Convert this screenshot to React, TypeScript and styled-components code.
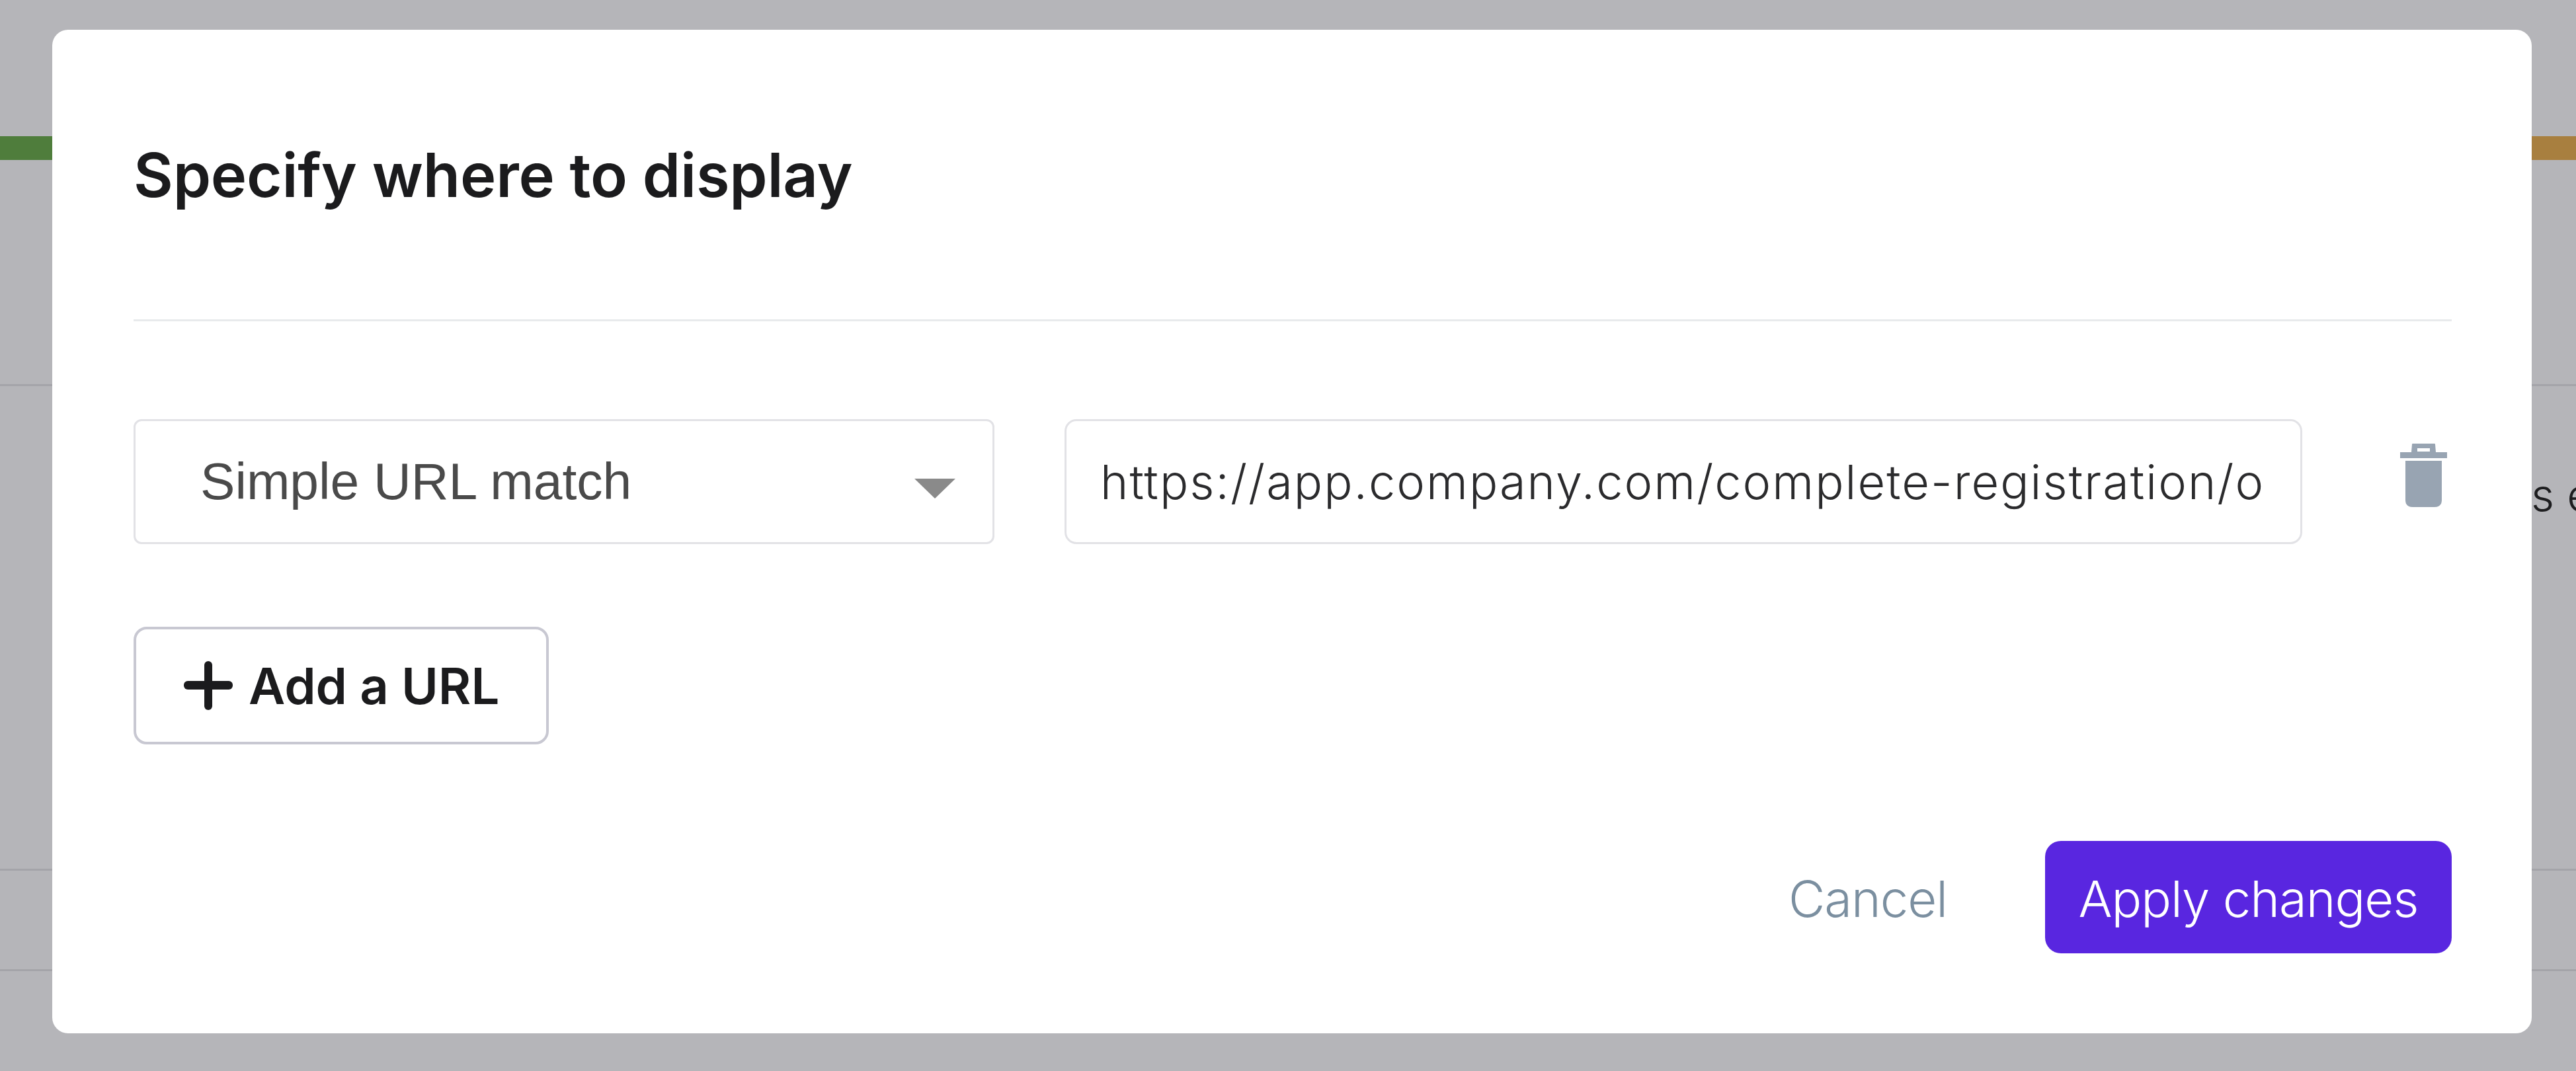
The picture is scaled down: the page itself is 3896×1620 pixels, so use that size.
import React from 'react'
import styled, { createGlobalStyle } from 'styled-components'

const GlobalStyle = createGlobalStyle`
  html, body {
    margin: 0;
    padding: 0;
    overflow: hidden;
    background: #b5b5b9;
  }
  * {
    box-sizing: border-box;
  }
`

const Page = styled.div`
  position: relative;
  width: 3896px;
  height: 1620px;
  overflow: hidden;
  background: #b5b5b9;
  font-family: 'Liberation Sans', Arial, sans-serif;
`

const Backdrop = styled.div`
  display: flex;
  flex-direction: column;
  padding-top: 206px;
`

const StatusStrip = styled.div`
  display: flex;
  justify-content: space-between;
  height: 36px;
`

const StatusSegment = styled.div<{ $color: string }>`
  width: 300px;
  background: ${(p) => p.$color};
`

const TableRow = styled.div<{ $height: number }>`
  display: flex;
  align-items: flex-start;
  height: ${(p) => p.$height}px;
  border-bottom: 3px solid #a4a4a9;
`

const RowText = styled.span`
  margin: 123px 0 0 3828px;
  font-family: Inter, sans-serif;
  font-size: 68px;
  font-weight: 300;
  line-height: 82px;
  white-space: nowrap;
  color: #1d1d1f;
`

const Modal = styled.div`
  position: absolute;
  top: 45px;
  left: 79px;
  width: 3750px;
  height: 1518px;
  display: flex;
  flex-direction: column;
  padding: 0 121px 0 123px;
  background: #fff;
  border-radius: 24px;
`

const Header = styled.div`
  height: 441px;
  padding-top: 165px;
  border-bottom: 3px solid #e8eaec;
`

const Title = styled.h2`
  margin: 0;
  font-family: Inter, sans-serif;
  font-size: 92px;
  line-height: 110px;
  font-weight: 600;
  letter-spacing: -0.2px;
  color: #1b1b1d;
`

const UrlRow = styled.div`
  display: flex;
  align-items: flex-start;
  margin-top: 148px;
`

const Select = styled.div`
  display: flex;
  align-items: center;
  justify-content: space-between;
  width: 1302px;
  height: 189px;
  padding: 0 56px 0 98px;
  border: 3px solid #e2e2e6;
  border-radius: 12px;
  font-size: 78.6px;
  color: #4a4a4a;
`

const Caret = styled.span`
  width: 0;
  height: 0;
  margin-top: 20px;
  border-left: 31px solid transparent;
  border-right: 31px solid transparent;
  border-top: 30px solid #8a8a8a;
`

const UrlInput = styled.div`
  width: 1872px;
  height: 189px;
  margin-left: 106px;
  padding: 0 51px;
  display: flex;
  align-items: center;
  border: 3px solid #e2e2e6;
  border-radius: 18px;
  font-family: Inter, sans-serif;
  font-size: 72px;
  font-weight: 300;
  letter-spacing: 2.06px;
  white-space: nowrap;
  overflow: hidden;
  color: #2b2b2d;
`

const TrashButton = styled.div`
  display: flex;
  margin: 37px 0 0 148px;
  color: #98a4b2;
`

const AddButton = styled.div`
  display: inline-flex;
  align-items: center;
  align-self: flex-start;
  gap: 24px;
  width: 628px;
  height: 178px;
  margin-top: 125px;
  padding-left: 72px;
  border: 4px solid #c8c8d2;
  border-radius: 20px;
  font-family: Inter, sans-serif;
  font-size: 76px;
  font-weight: 600;
  color: #1b1b1d;
`

const Footer = styled.div`
  display: flex;
  align-items: center;
  justify-content: flex-end;
  gap: 148px;
  margin-top: 146px;
`

const CancelLink = styled.span`
  padding-top: 3px;
  font-family: Inter, sans-serif;
  font-size: 76px;
  font-weight: 300;
  letter-spacing: -1px;
  color: #7b8fa0;
`

const ApplyButton = styled.div`
  display: flex;
  align-items: center;
  justify-content: center;
  width: 615px;
  height: 170px;
  padding-top: 3px;
  border-radius: 24px;
  background: #5926e0;
  font-family: Inter, sans-serif;
  font-size: 76px;
  font-weight: 300;
  letter-spacing: -1px;
  color: #fff;
`

const TrashIcon = () => (
  <svg width="72" height="96" viewBox="0 0 72 96" fill="currentColor">
    <path
      fillRule="evenodd"
      d="M18 1q0-1 1-1h33q1 0 1 1l1 12h17v9H0v-9h17zM26 7v5h19V7z"
    />
    <path d="M8 26h55v59q0 11-11 11H19Q8 96 8 85z" />
  </svg>
)

const PlusIcon = () => (
  <svg width="74" height="74" viewBox="0 0 74 74" fill="currentColor">
    <rect x="31" y="0" width="12" height="74" rx="6" />
    <rect x="0" y="30" width="74" height="13" rx="6" />
  </svg>
)

const App: React.FC = () => {
  return (
    <Page>
      <GlobalStyle />
      <Backdrop>
        <StatusStrip>
          <StatusSegment $color='#4f7d3c' />
          <StatusSegment $color='#a87f3f' />
        </StatusStrip>
        <TableRow $height={342} />
        <TableRow $height={733}>
          <RowText>s e</RowText>
        </TableRow>
        <TableRow $height={152} />
      </Backdrop>
      <Modal>
        <Header>
          <Title>Specify where to display</Title>
        </Header>
        <UrlRow>
          <Select>
            Simple URL match
            <Caret />
          </Select>
          <UrlInput>https://app.company.com/complete-registration/o</UrlInput>
          <TrashButton>
            <TrashIcon />
          </TrashButton>
        </UrlRow>
        <AddButton>
          <PlusIcon />
          Add a URL
        </AddButton>
        <Footer>
          <CancelLink>Cancel</CancelLink>
          <ApplyButton>Apply changes</ApplyButton>
        </Footer>
      </Modal>
    </Page>
  )
}

export default App
